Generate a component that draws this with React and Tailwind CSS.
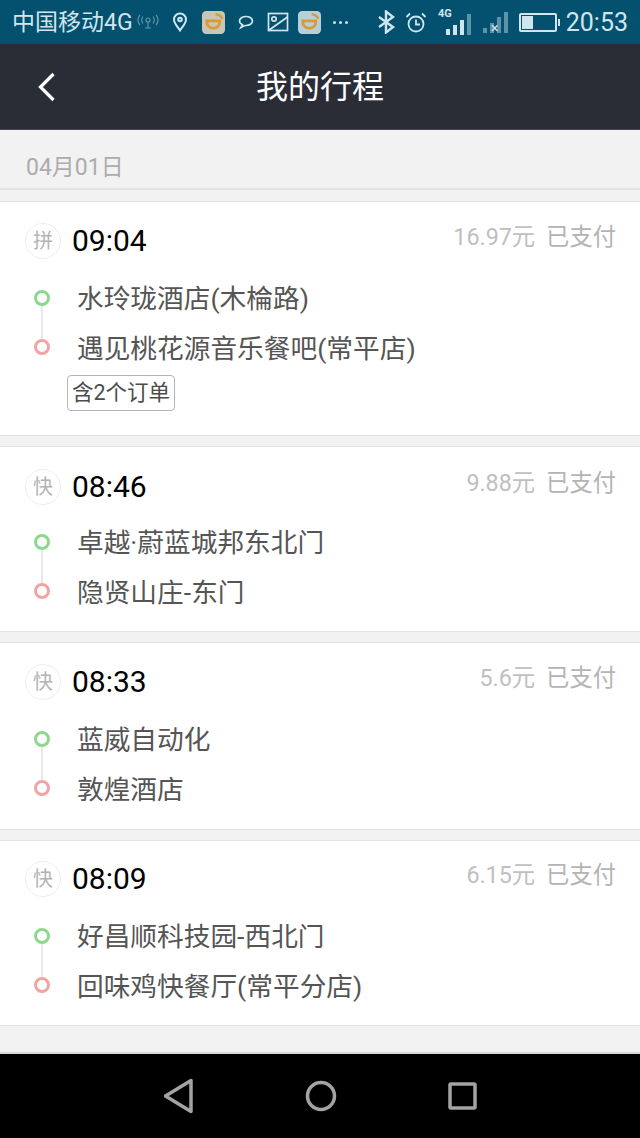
const FONT = { fontFamily: '"Roboto", "Noto Sans CJK SC", sans-serif' };

const TRIPS = [
  { type: "拼", time: "09:04", price: "16.97元", from: "水玲珑酒店(木棆路)", to: "遇见桃花源音乐餐吧(常平店)", orders: "含2个订单", h: "h-[235px]", pt: "pt-[21px]", mt: "mt-[15px]" },
  { type: "快", time: "08:46", price: "9.88元", from: "卓越·蔚蓝城邦东北门", to: "隐贤山庄-东门", h: "h-[186px]", pt: "pt-[22px]", mt: "mt-[13px]" },
  { type: "快", time: "08:33", price: "5.6元", from: "蓝威自动化", to: "敦煌酒店", h: "h-[188px]", pt: "pt-[21px]", mt: "mt-[15px]" },
  { type: "快", time: "08:09", price: "6.15元", from: "好昌顺科技园-西北门", to: "回味鸡快餐厅(常平分店)", h: "h-[186px]", pt: "pt-[20px]", mt: "mt-[15px]" },
];

function DidiIcon({ bg }) {
  return (
    <svg width="23" height="23" viewBox="0 0 22 22" className="shrink-0">
      <rect width="22" height="22" rx="4" fill={bg} />
      <path d="M4.500 9.500h12.500c0 4.500-2.500 7-6.200 7S4.500 14 4.500 9.500z" fill="none" stroke="#d99a32" strokeWidth="2.600" />
      <path d="M13 3c3 .4 5.500 2 6.500 4.500" fill="none" stroke="#d99a32" strokeWidth="2.200" />
    </svg>
  );
}

function StatusBar() {
  return (
    <div className="h-11 bg-[#04506f] flex items-center pl-3 pr-3 text-[#cfe6ee] shrink-0">
      <span className="text-[23px] leading-none w-[120px] whitespace-nowrap">中国移动4G</span>
      <svg width="22" height="18" viewBox="0 0 22 18" className="ml-[5px] text-[#5d92a8]" fill="none" stroke="currentColor" strokeWidth="1.200">
        <circle cx="11" cy="7" r="2" />
        <path d="M11 9v6M8 15h6M6 3.500c-1.500 2-1.500 5 0 7M16 3.500c1.500 2 1.500 5 0 7M3 2c-2.500 3-2.500 7 0 10M19 2c2.500 3 2.500 7 0 10" />
      </svg>
      <svg width="16" height="20" viewBox="0 0 16 20" className="ml-[13px]" fill="none" stroke="currentColor" strokeWidth="2">
        <path d="M8 18.500C4.500 13.500 2 11 2 7.500a6 6 0 0 1 12 0c0 3.500-2.500 6-6 11z" />
        <circle cx="8" cy="7.500" r="1.800" />
      </svg>
      <div className="ml-[14px]"><DidiIcon bg="#c9c6b8" /></div>
      <svg width="16" height="15" viewBox="0 0 16 15" className="ml-[13px]" fill="none" stroke="currentColor" strokeWidth="1.700">
        <path d="M3 12.500l1.500-2.800C2.500 8.800 1.500 7.500 1.500 6c0-2.500 3-4.500 6.500-4.500S14.500 3.500 14.500 6 11.500 10.500 8 10.500c-1.500 0-3 .8-5 2z" />
      </svg>
      <svg width="22" height="20" viewBox="0 0 22 20" className="ml-[13px]" fill="none" stroke="currentColor" strokeWidth="1.700">
        <rect x="1.500" y="1.500" width="19" height="17" />
        <circle cx="7" cy="7" r="2.200" />
        <path d="M1.500 18.500 20.500 5" />
      </svg>
      <div className="ml-[9px]"><DidiIcon bg="#b9cfd8" /></div>
      <span className="ml-[12px] w-4 flex gap-[3px]">
        <i className="w-[3px] h-[3px] bg-current rounded-full" />
        <i className="w-[3px] h-[3px] bg-current rounded-full" />
        <i className="w-[3px] h-[3px] bg-current rounded-full" />
      </span>
      <svg width="18" height="24" viewBox="0 0 18 24" className="ml-[28px]" fill="none" stroke="currentColor" strokeWidth="2.400">
        <path d="M2 7l14 10-7 5.500V1.500L16 7 2 17" />
      </svg>
      <svg width="22" height="23" viewBox="0 0 22 22" className="ml-[10px]" fill="none" stroke="currentColor" strokeWidth="1.800">
        <circle cx="11" cy="12.500" r="7.500" />
        <path d="M11 8v5h4M1.500 5.500 5 2M20.500 5.500 17 2" />
      </svg>
      <div className="ml-[11px] relative w-[33px] h-[25px] flex items-end gap-[3px] pl-[8px]">
        <span className="absolute left-0 top-[-2px] text-[11px] font-bold leading-none">4G</span>
        <i className="w-[4px] h-[6px] bg-current" />
        <i className="w-[4px] h-[10px] bg-current" />
        <i className="w-[4px] h-[15px] bg-current" />
        <i className="w-[4px] h-[21px] bg-[#5d92a8]" />
      </div>
      <div className="ml-[12px] relative w-[26px] h-[22px] flex items-end gap-[3px]">
        <i className="w-[4px] h-[5px] bg-[#5d92a8]" />
        <i className="w-[4px] h-[10px] bg-[#5d92a8]" />
        <i className="w-[4px] h-[16px] bg-[#5d92a8]" />
        <i className="w-[4px] h-[21px] bg-[#5d92a8]" />
        <span className="absolute left-[8px] bottom-[-2px] text-[14px] leading-none">×</span>
      </div>
      <div className="ml-[10px] w-[38px] h-[19px] border-2 border-current rounded-[2px] p-px relative shrink-0">
        <div className="w-[11px] h-full bg-current" />
        <i className="absolute right-[-5px] top-[4px] w-[2px] h-[7px] bg-current" />
      </div>
      <span className="ml-auto text-[25px] leading-none">20:53</span>
    </div>
  );
}

function Header() {
  return (
    <div className="h-[86px] bg-[#2b2d36] border-b border-[#45464d] relative flex items-center justify-center shrink-0">
      <svg width="20" height="30" viewBox="0 0 20 30" className="absolute left-[37px] top-[28px]" fill="none" stroke="#fff" strokeWidth="3.200">
        <path d="M16.500 2 3.500 15l13 13" />
      </svg>
      <span className="text-white text-[32px] leading-none">我的行程</span>
    </div>
  );
}

function TripCard({ trip }) {
  return (
    <div className={`${trip.h} ${trip.pt} bg-white border-y border-[#e2e2e2] pl-[25px] pr-6`}>
      <div className="flex items-center h-9">
        <span className="w-9 h-9 rounded-full border border-[#eeeeee] flex items-center justify-center text-[20px] text-[#b4b4b4] shrink-0">
          {trip.type}
        </span>
        <span className="ml-[11px] text-[30px] leading-none text-black">{trip.time}</span>
        <span className="ml-auto self-start mt-[3px] text-[23.300px] leading-none text-[#c0c0c0]">{trip.price}</span>
        <span className="ml-[11px] self-start mt-[3px] text-[23.300px] leading-none text-[#b4b4b4]">已支付</span>
      </div>
      <div className={`flex ${trip.mt}`}>
        <div className="w-[33px] ml-[9px] flex flex-col items-start pt-[16px] shrink-0">
          <span className="w-4 h-4 rounded-full border-[3px] border-[#8ed88e]" />
          <span className="w-[2px] h-[33px] bg-[#e8e8e8] ml-[7px]" />
          <span className="w-4 h-4 rounded-full border-[3px] border-[#f0a5a5]" />
        </div>
        <div className="ml-[10px] text-[26.700px] leading-[50px] text-[#555555] whitespace-nowrap">
          <div>{trip.from}</div>
          <div>{trip.to}</div>
        </div>
      </div>
      {trip.orders ? (
        <span className="block w-[108px] h-9 ml-[42px] mt-[1px] border border-[#b5b5b5] rounded-[4px] text-[21.500px] leading-[34px] text-center text-[#4c4c4c] whitespace-nowrap">
          {trip.orders}
        </span>
      ) : null}
    </div>
  );
}

export default function App() {
  return (
    <div className="w-[640px] h-[1138px] overflow-hidden flex flex-col bg-[#f2f2f2]" style={FONT}>
      <StatusBar />
      <Header />
      <div className="flex-1 overflow-hidden">
        <div className="h-[60px] pl-[26px] pt-[23px] text-[23px] leading-[30px] text-[#acacac] border-b-2 border-[#e2e2e2]">
          04月01日
        </div>
        <div className="flex flex-col gap-[10px] pt-[11px]">
          {TRIPS.map((trip) => (
            <TripCard key={trip.time} trip={trip} />
          ))}
        </div>
      </div>
      <div className="h-[86px] bg-black border-t-2 border-[#d8d8d8] flex items-center justify-center gap-[111px] pl-[1px] shrink-0">
        <svg width="30" height="36" viewBox="0 0 30 36" fill="none" stroke="#a3a3a3" strokeWidth="3.500" strokeLinejoin="round">
          <path d="M27 2.500v31L1.500 18z" />
        </svg>
        <svg width="32" height="32" viewBox="0 0 32 32" fill="none" stroke="#a3a3a3" strokeWidth="3.500">
          <circle cx="16" cy="16" r="13.500" />
        </svg>
        <svg width="30" height="30" viewBox="0 0 30 30" fill="none" stroke="#a3a3a3" strokeWidth="3.500">
          <rect x="2" y="3" width="25" height="24" rx="1" />
        </svg>
      </div>
    </div>
  );
}
